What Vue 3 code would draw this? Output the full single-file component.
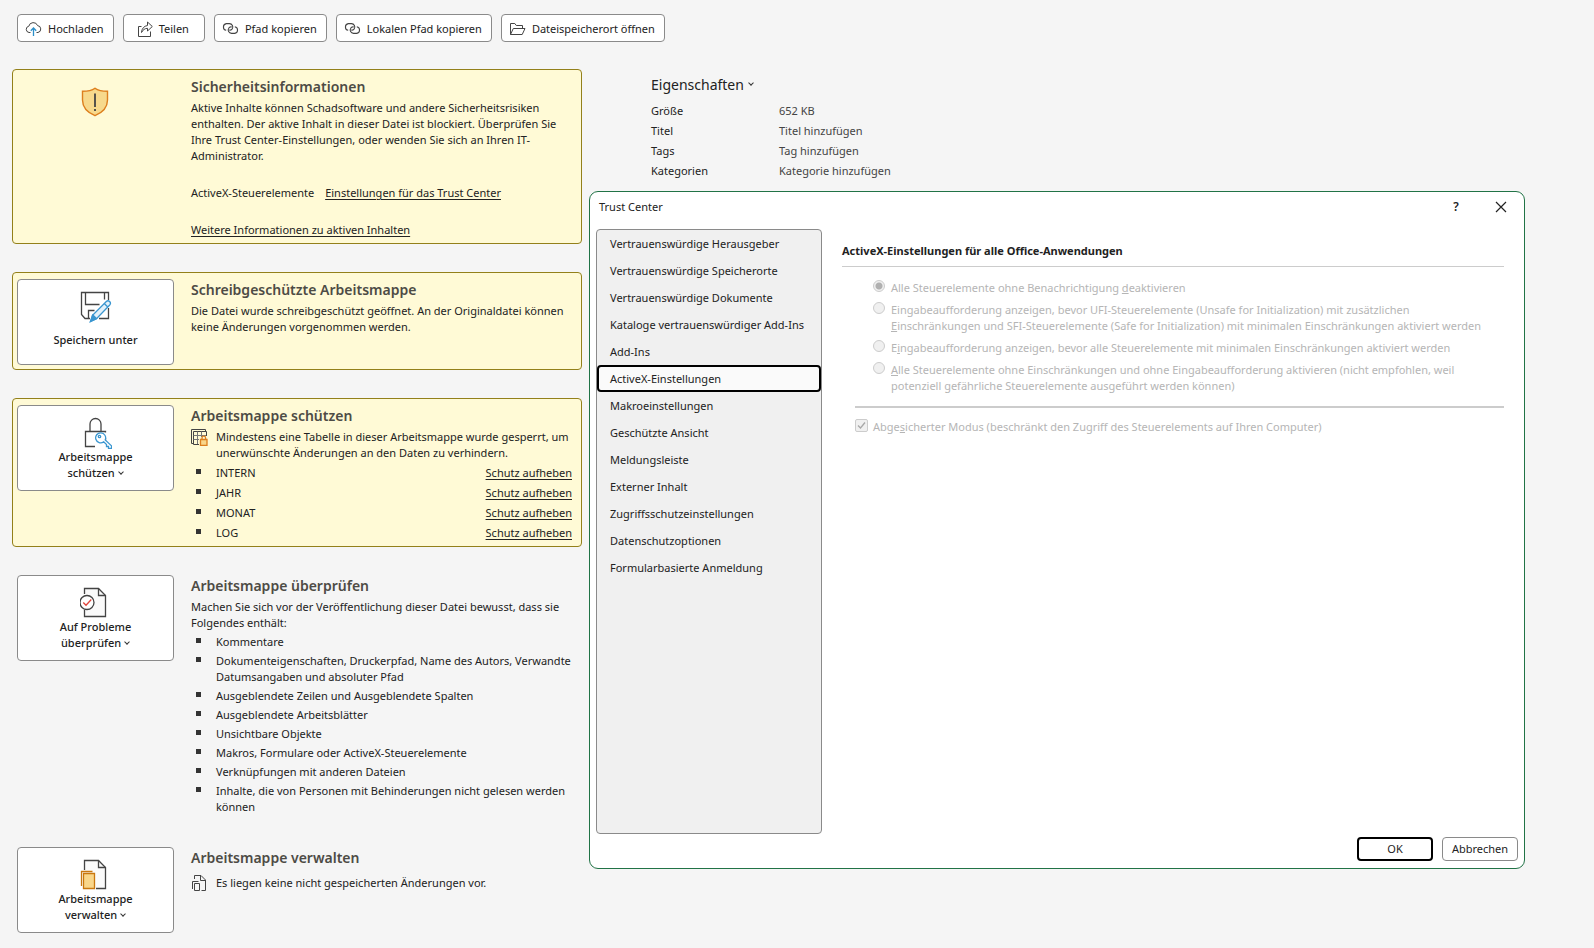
<script setup>
import { ref } from 'vue'

const sheets = ['INTERN', 'JAHR', 'MONAT', 'LOG']
const findings = [
  'Kommentare',
  'Dokumenteigenschaften, Druckerpfad, Name des Autors, Verwandte Datumsangaben und absoluter Pfad',
  'Ausgeblendete Zeilen und Ausgeblendete Spalten',
  'Ausgeblendete Arbeitsblätter',
  'Unsichtbare Objekte',
  'Makros, Formulare oder ActiveX-Steuerelemente',
  'Verknüpfungen mit anderen Dateien',
  'Inhalte, die von Personen mit Behinderungen nicht gelesen werden können',
]
const properties = [
  ['Größe', '652 KB'],
  ['Titel', 'Titel hinzufügen'],
  ['Tags', 'Tag hinzufügen'],
  ['Kategorien', 'Kategorie hinzufügen'],
]
const pages = [
  'Vertrauenswürdige Herausgeber',
  'Vertrauenswürdige Speicherorte',
  'Vertrauenswürdige Dokumente',
  'Kataloge vertrauenswürdiger Add-Ins',
  'Add-Ins',
  'ActiveX-Einstellungen',
  'Makroeinstellungen',
  'Geschützte Ansicht',
  'Meldungsleiste',
  'Externer Inhalt',
  'Zugriffsschutzeinstellungen',
  'Datenschutzoptionen',
  'Formularbasierte Anmeldung',
]
const activePage = ref('ActiveX-Einstellungen')
</script>

<template>
  <div class="page">
    <div class="toolbar">
      <button type="button" class="tool">
        <svg width="17" height="16" viewBox="0 0 17 16" fill="none" stroke="#444">
          <path d="M5.5 11.5H4A3.2 3.2 0 0 1 3.8 5.2A4.6 4.6 0 0 1 12.6 4.6A3.5 3.5 0 0 1 13 11.5H11.5" />
          <path d="M8.5 15V7M5.8 9.7L8.5 7L11.2 9.7" stroke="#2c8fc9" stroke-width="1.3" />
        </svg>
        Hochladen
      </button>
      <button type="button" class="tool tool-wide">
        <svg width="16" height="16" viewBox="0 0 16 16" fill="none" stroke="#444">
          <path d="M4.5 5.5H1.5V15.5H13.5V10.5" />
          <path d="M4.5 11.5C4.8 7.5 7 5 10.5 4.5V1L15.3 5.5L10.5 10V7.3C7.8 7.4 6 8.8 4.5 11.5Z" />
        </svg>
        Teilen
      </button>
      <button v-for="label in ['Pfad kopieren', 'Lokalen Pfad kopieren']" :key="label" type="button" class="tool">
        <svg width="17" height="16" viewBox="0 0 17 16" fill="none" stroke="#444" stroke-width="1.1">
          <path d="M4.200 9.300A3.400 3.400 0 0 1 4.300 2.600H7.500A3.400 3.400 0 0 1 10.300 7.800C9.700 8.900 8.500 9.300 7.200 9" />
          <path d="M12.800 5.700A3.400 3.400 0 0 1 12.700 12.400H9.500A3.400 3.400 0 0 1 6.700 7.200C7.300 6.100 8.500 5.700 9.800 6" />
        </svg>
        {{ label }}
      </button>
      <button type="button" class="tool">
        <svg width="17" height="16" viewBox="0 0 17 16" fill="none" stroke="#444">
          <path d="M1.5 13.5V2.5H5.8L7.3 4.5H13.5V7.5M1.5 13.5L4.3 7.5H16L13.2 13.5Z" />
        </svg>
        Dateispeicherort öffnen
      </button>
    </div>

    <div class="columns">
      <main class="sections">
        <section class="section card">
          <div class="badge">
            <svg width="28" height="30" viewBox="0 0 28 30">
              <path d="M14 1.2C17 3.4 21.500 4.300 26.500 4.300V13C26.500 21 21.500 25.500 14 28.700C6.500 25.500 1.500 21 1.500 13V4.300C6.500 4.300 11 3.400 14 1.200Z" fill="#f7d98c" stroke="#dd7f1e" stroke-width="1.400" />
              <path d="M14 6.500V20M14 22V24" stroke="#444" stroke-width="1.800" />
            </svg>
          </div>
          <div class="text">
            <h2>Sicherheitsinformationen</h2>
            <p>Aktive Inhalte können Schadsoftware und andere Sicherheitsrisiken enthalten. Der aktive Inhalt in dieser Datei ist blockiert. Überprüfen Sie Ihre Trust Center-Einstellungen, oder wenden Sie sich an Ihren IT-Administrator.</p>
            <p class="link-row"><span>ActiveX-Steuerelemente</span><a href="#">Einstellungen für das Trust Center</a></p>
            <p class="link-row"><a href="#">Weitere Informationen zu aktiven Inhalten</a></p>
          </div>
        </section>

        <section class="section card">
          <button type="button" class="command single">
            <svg width="32" height="32" viewBox="0 0 32 32" fill="none" stroke="#444" stroke-width="1.300">
              <path d="M28.500 9V1.500H1.500V23.500L5 27.500H10M28.500 17V27.500H19" />
              <path d="M5.500 1.500V13.500H19.500M24.500 1.500V8.500" />
              <path d="M8.500 27.500V19.500H14.500M12.500 27V24" />
              <path d="M10.500 30.500L12.800 24L26.300 10.500C27.300 9.600 28.700 9.600 29.600 10.500C30.600 11.500 30.600 13 29.700 14L16.500 27.600Z" fill="#e3f1fa" stroke="#3a96d0" />
              <path d="M10.500 30.500L12.800 24L16.500 27.600Z" fill="#3a96d0" stroke="#3a96d0" />
              <path d="M24.300 12.500L27.800 16" stroke="#3a96d0" />
            </svg>
            <span>Speichern unter</span>
          </button>
          <div class="text">
            <h2>Schreibgeschützte Arbeitsmappe</h2>
            <p>Die Datei wurde schreibgeschützt geöffnet. An der Originaldatei können keine Änderungen vorgenommen werden.</p>
          </div>
        </section>

        <section class="section card">
          <button type="button" class="command">
            <svg width="32" height="32" viewBox="0 0 32 32" fill="none" stroke="#444" stroke-width="1.300">
              <path d="M15 29.500H5.500V14.500H25.500V15.500M25.500 24V21" />
              <path d="M10 14.500V7A5.500 5.500 0 0 1 21 7V14.500" />
              <path d="M23.700 24.800A5 5 0 1 1 25.200 22.900L31.500 28.800V31.500H28.500V29.500H26.500V27.500Z" fill="#fff" stroke="#3a96d0" />
              <circle cx="19.500" cy="19.500" r="1.200" stroke="#3a96d0" />
            </svg>
            <span>Arbeitsmappe<br>schützen <i class="chevron"></i></span>
          </button>
          <div class="text">
            <h2>Arbeitsmappe schützen</h2>
            <div class="note">
              <svg width="17" height="17" viewBox="0 0 17 17" fill="none" stroke="#444">
                <path d="M14.500 2V.500H.500V14.500H2" />
                <path d="M2.500 2.500H15.500V7M2.500 2.500V15.500H8" />
                <path d="M2.500 6.500H15M2.500 10.500H8M6.500 2.500V15M10.500 2.500V8" stroke="#777" />
                <path d="M9.500 10.500H16V16.500H9.500Z" fill="#f9d68a" stroke="#dd7f1e" stroke-width="1.300" />
                <path d="M11 10.500V9A1.800 1.800 0 0 1 14.600 9V10.500" stroke="#dd7f1e" stroke-width="1.300" />
              </svg>
              <p>Mindestens eine Tabelle in dieser Arbeitsmappe wurde gesperrt, um unerwünschte Änderungen an den Daten zu verhindern.</p>
            </div>
            <ul class="bullets sheets">
              <li v-for="sheet in sheets" :key="sheet">
                <span>{{ sheet }}</span><a href="#">Schutz aufheben</a>
              </li>
            </ul>
          </div>
        </section>

        <section class="section">
          <button type="button" class="command">
            <svg width="32" height="32" viewBox="0 0 32 32" fill="none" stroke="#444" stroke-width="1.300">
              <path d="M4.500 7V1.500H18.500L25.500 8.500V29.500H4.500V23" fill="#fafafa" />
              <path d="M18.500 1.500V8.500H25.500" />
              <circle cx="7" cy="15.500" r="7" fill="#fff" />
              <path d="M3.300 15.500L6 18.300L11.300 12.500" stroke="#e0453c" />
            </svg>
            <span>Auf Probleme<br>überprüfen <i class="chevron"></i></span>
          </button>
          <div class="text">
            <h2>Arbeitsmappe überprüfen</h2>
            <p>Machen Sie sich vor der Veröffentlichung dieser Datei bewusst, dass sie Folgendes enthält:</p>
            <ul class="bullets findings">
              <li v-for="finding in findings" :key="finding"><span>{{ finding }}</span></li>
            </ul>
          </div>
        </section>

        <section class="section">
          <button type="button" class="command">
            <svg width="32" height="32" viewBox="0 0 32 32" fill="none" stroke="#444" stroke-width="1.300">
              <path d="M4.500 11V1.500H18.500L25.500 8.500V29.500H16" fill="#fafafa" />
              <path d="M18.500 1.500V8.500H25.500" />
              <path d="M1.500 27V12.500H12.500" stroke="#c9770f" />
              <path d="M3.500 14.500H14.500V29.500H3.500Z" fill="#f9d68a" stroke="#c9770f" />
            </svg>
            <span>Arbeitsmappe<br>verwalten <i class="chevron"></i></span>
          </button>
          <div class="text">
            <h2>Arbeitsmappe verwalten</h2>
            <div class="note unsaved">
              <svg width="17" height="17" viewBox="0 0 17 17" fill="none" stroke="#444">
                <path d="M3.500 4V.500H10L14.500 5V15.500H10.500M9.500 .500V5.500H14.500M1.500 14V6.500H7.500" />
                <path d="M3.500 8.500H8.500V15.500H3.500Z" />
              </svg>
              <p>Es liegen keine nicht gespeicherten Änderungen vor.</p>
            </div>
          </div>
        </section>
      </main>

      <aside class="properties">
        <button type="button" class="properties-title">Eigenschaften <i class="chevron"></i></button>
        <dl>
          <template v-for="[name, value] in properties" :key="name">
            <dt>{{ name }}</dt>
            <dd>{{ value }}</dd>
          </template>
        </dl>
      </aside>
    </div>

    <div class="dialog" role="dialog" aria-labelledby="dialog-title">
      <header class="titlebar">
        <span id="dialog-title">Trust Center</span>
        <button type="button" class="help" aria-label="Hilfe">?</button>
        <button type="button" class="close" aria-label="Schließen">
          <svg width="12" height="12" viewBox="0 0 12 12" stroke="#222" stroke-width="1.200"><path d="M1 1L11 11M11 1L1 11" /></svg>
        </button>
      </header>
      <div class="dialog-body">
        <nav class="pages">
          <button v-for="page in pages" :key="page" type="button" :class="{ active: page === activePage }" @click="activePage = page">{{ page }}</button>
        </nav>
        <div class="settings">
          <h3>ActiveX-Einstellungen für alle Office-Anwendungen</h3>
          <div class="options">
            <label><input type="radio" name="activex" checked disabled><span>Alle Steuerelemente ohne Benachrichtigung <u>d</u>eaktivieren</span></label>
            <label><input type="radio" name="activex" disabled><span>Eingabeaufforderung anzeigen, bevor UFI-Steuerelemente (Unsafe for Initialization) mit zusätzlichen <br><u>E</u>inschränkungen und SFI-Steuerelemente (Safe for Initialization) mit minimalen Einschränkungen aktiviert werden</span></label>
            <label><input type="radio" name="activex" disabled><span>E<u>i</u>ngabeaufforderung anzeigen, bevor alle Steuerelemente mit minimalen Einschränkungen aktiviert werden</span></label>
            <label><input type="radio" name="activex" disabled><span><u>A</u>lle Steuerelemente ohne Einschränkungen und ohne Eingabeaufforderung aktivieren (nicht empfohlen, weil <br>potenziell gefährliche Steuerelemente ausgeführt werden können)</span></label>
          </div>
          <div class="safe-mode">
            <label>
              <span class="check">
                <input type="checkbox" checked disabled>
                <svg width="9" height="9" viewBox="0 0 9 9" fill="none" stroke="#a8a8a8" stroke-width="1.300"><path d="M1 4.500L3.500 7L8 1.500" /></svg>
              </span>
              <span>Abge<u>s</u>icherter Modus (beschränkt den Zugriff des Steuerelements auf Ihren Computer)</span>
            </label>
          </div>
        </div>
      </div>
      <footer class="actions">
        <button type="button" class="default">OK</button>
        <button type="button">Abbrechen</button>
      </footer>
    </div>
  </div>
</template>

<style>
body {
  background: #f5f5f5;
}
</style>

<style scoped>
.page {
  position: relative;
  box-sizing: border-box;
  min-height: 100vh;
  padding: 14px 12px;
  color: #222;
  font: 11px/16px "Noto Sans", "Open Sans", sans-serif;
}
.page *,
.page *::before {
  box-sizing: border-box;
}
button {
  margin: 0;
  padding: 0;
  border: 0;
  background: none;
  color: inherit;
  font: inherit;
}
svg {
  flex: none;
}
h2,
h3,
p,
ul,
dl,
dd {
  margin: 0;
  padding: 0;
}
a {
  color: inherit;
  text-underline-offset: 2px;
}
.chevron {
  display: inline-block;
  width: 4px;
  height: 4px;
  margin: 0 1px 3px 1px;
  border: solid #333;
  border-width: 0 1px 1px 0;
  transform: rotate(45deg);
}

.toolbar {
  display: flex;
  gap: 9px;
  margin: 0 5px 27px;
}
.tool {
  display: flex;
  align-items: center;
  gap: 6px;
  height: 28px;
  padding: 1px 9px 0 7px;
  border: 1px solid #8a8a8a;
  border-radius: 4px;
  background: #fff;
}
.tool-wide {
  padding: 1px 15px 0 13px;
}

.columns {
  display: grid;
  grid-template-columns: 57fr 100fr;
}
.sections {
  display: flex;
  flex-direction: column;
  gap: 28px;
}
.section {
  display: grid;
  grid-template-columns: 157px minmax(0, 1fr);
  column-gap: 17px;
  align-items: start;
  padding: 0 0 3px 5px;
}
.card {
  padding: 6px 0 4px 4px;
  border: 1px solid #93801a;
  border-radius: 4px;
  background: #fffad6;
}
.badge {
  display: flex;
  justify-content: center;
  padding: 11px 2px 0 0;
}
.command {
  display: flex;
  flex-direction: column;
  align-items: center;
  height: 86px;
  padding-top: 11px;
  border: 1px solid #8a8a8a;
  border-radius: 4px;
  background: #fff;
  font-weight: 500;
}
.single {
  gap: 9px;
}
.text {
  padding-bottom: 1px;
}
h2 {
  margin-bottom: 2px;
  color: #4d4b45;
  font-size: 14px;
  font-weight: 600;
  line-height: 22px;
}
.text > p {
  padding-right: 8px;
}
.text > .link-row {
  display: flex;
  gap: 11px;
  margin-top: 21px;
}
.note {
  display: flex;
  gap: 8px;
}
.unsaved {
  margin-top: 6px;
}
.bullets {
  display: flex;
  flex-direction: column;
  list-style: none;
}
.bullets li {
  display: flex;
  padding-left: 5px;
}
.bullets li::before {
  content: "";
  flex: none;
  width: 5px;
  height: 5px;
  margin: 4px 15px 0 0;
  background: #333;
}
.findings {
  gap: 3px;
  margin-top: 3px;
}
.sheets {
  gap: 4px;
  margin: 4px 9px 0 0;
}
.sheets a {
  margin-left: auto;
}

.properties {
  padding: 5px 0 0 69px;
}
.properties-title {
  font-size: 14px;
  line-height: 22px;
}
.properties-title .chevron {
  margin-bottom: 5px;
}
.properties dl {
  display: grid;
  grid-template-columns: 128px 1fr;
  row-gap: 4px;
  margin-top: 7px;
}
.properties dd {
  color: #444;
}

.dialog {
  position: absolute;
  top: 191px;
  left: 589px;
  right: 69px;
  border: 1px solid #217346;
  border-radius: 9px;
  background: #fff;
}
.titlebar {
  display: flex;
  align-items: center;
  height: 37px;
  padding: 0 17px 8px 9px;
}
.help {
  margin-left: auto;
  width: 12px;
  font-size: 12px;
  font-weight: 600;
}
.close {
  display: flex;
  margin-left: 33px;
}
.dialog-body {
  display: flex;
  gap: 20px;
  min-height: 605px;
  padding: 0 20px 0 6px;
}
.pages {
  display: flex;
  flex-direction: column;
  flex: none;
  width: 226px;
  border: 1px solid #8a8a8a;
  border-radius: 4px;
  background: #f0f0f0;
}
.pages button {
  height: 27px;
  padding: 0 13px;
  text-align: left;
}
.pages .active {
  padding: 0 11px;
  border: 2px solid #000;
  border-radius: 4px;
  background: #fafafa;
}
.settings {
  flex: 1;
  padding-top: 14px;
}
h3 {
  padding-bottom: 7px;
  border-bottom: 1px solid #ccc;
  font-size: 11px;
  font-weight: 700;
}
.options {
  display: flex;
  flex-direction: column;
  gap: 6px;
  margin-left: 13px;
  padding: 13px 0 12px 18px;
  border-bottom: 2px solid #ccc;
  color: #b5b5b5;
}
label {
  display: flex;
  gap: 6px;
}
input {
  appearance: none;
  flex: none;
  width: 12px;
  height: 12px;
  margin: 0;
  border: 1px solid #ccc;
  border-radius: 50%;
  background: #f0f0f0;
}
input[type="radio"]:checked {
  background: radial-gradient(circle, #b0b0b0 3px, #f0f0f0 4px);
}
.safe-mode {
  margin-left: 13px;
  padding-top: 11px;
  color: #b5b5b5;
}
.safe-mode label {
  gap: 5px;
}
.check {
  display: grid;
  place-items: center;
  width: 13px;
  height: 13px;
}
.check > * {
  grid-area: 1 / 1;
}
.check input {
  width: 13px;
  height: 13px;
  border-radius: 2px;
}
.actions {
  display: flex;
  justify-content: flex-end;
  gap: 9px;
  padding: 3px 6px 7px;
}
.actions button {
  width: 76px;
  height: 24px;
  border: 1px solid #8a8a8a;
  border-radius: 4px;
  background: #fff;
}
.actions .default {
  border: 2px solid #000;
}
</style>
